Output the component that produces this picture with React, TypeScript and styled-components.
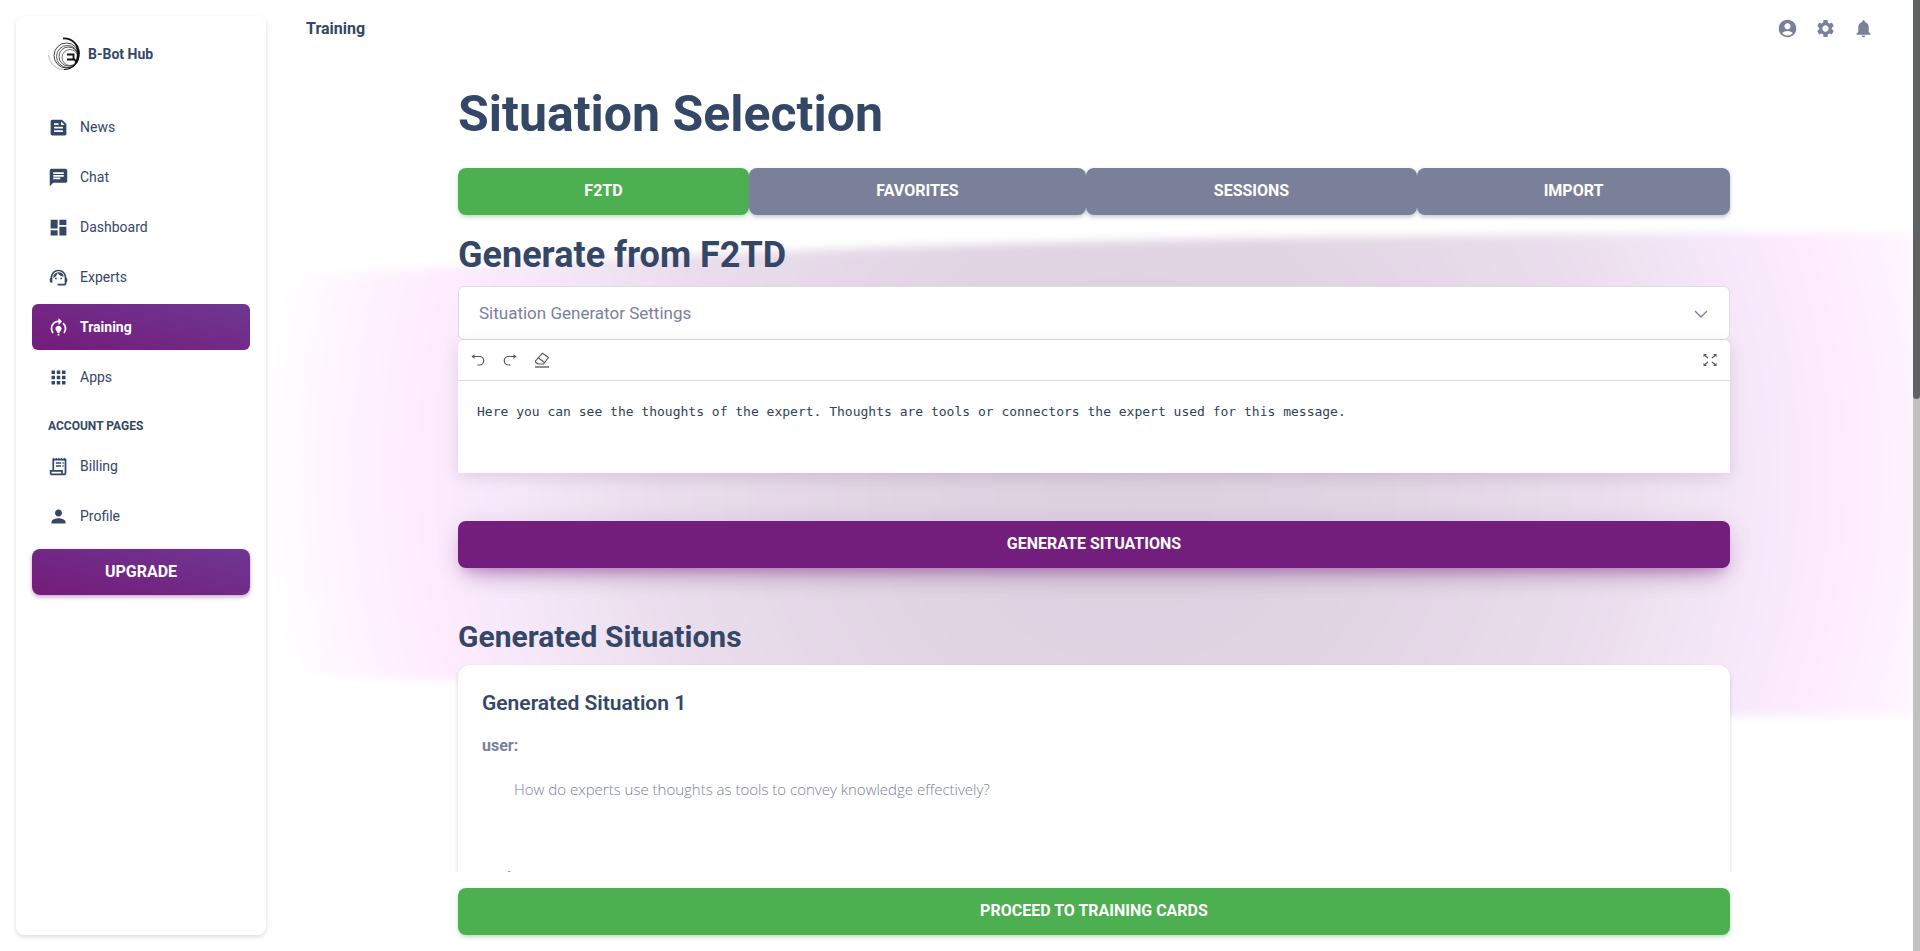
import React from 'react';
import styled, { createGlobalStyle, css } from 'styled-components';
import {
  MdAccountCircle,
  MdApps,
  MdChat,
  MdDashboard,
  MdFeed,
  MdModelTraining,
  MdNotifications,
  MdPerson,
  MdReceiptLong,
  MdSettings,
  MdSupportAgent,
} from 'react-icons/md';

const navy = '#344767';
const slate = '#7b809a';
const green = '#4caf50';
const purple = '#731e7c';
const purpleGradient = 'linear-gradient(195deg, #6e3792, #751b7a)';

const GlobalStyle = createGlobalStyle`
  *, *::before, *::after { box-sizing: border-box; }
  body {
    margin: 0;
    background: #fff;
    color: ${navy};
    font-family: Roboto, "Liberation Sans", sans-serif;
    font-size: 16px;
    line-height: 24px;
  }
  h1, h2, h3, h4, p, ul { margin: 0; padding: 0; }
  button, textarea { font: inherit; }
`;

const Shell = styled.div`
  display: flex;
  height: 100vh;
  overflow: hidden;
`;

const Sidebar = styled.aside`
  display: flex;
  flex-direction: column;
  flex: none;
  width: 250px;
  margin: 16px 8px 16px 16px;
  padding: 0 16px;
  border-radius: 8px;
  background: #fff;
  box-shadow: 0 2px 4px rgba(0, 0, 0, 0.14);
  overflow-y: auto;
`;

const Brand = styled.a`
  display: flex;
  align-items: center;
  gap: 6px;
  height: 76px;
  margin-bottom: 12px;
  padding-left: 16px;
  color: ${navy};
  font-size: 14px;
  font-weight: 700;
  text-decoration: none;
`;

const NavList = styled.ul`
  display: flex;
  flex-direction: column;
  gap: 4px;
  list-style: none;
`;

const NavLink = styled.a<{ $active?: boolean }>`
  display: flex;
  align-items: center;
  gap: 11px;
  height: 46px;
  padding-left: 16px;
  border-radius: 6px;
  color: ${(p) => (p.$active ? '#fff' : navy)};
  background: ${(p) => (p.$active ? purpleGradient : 'none')};
  font-size: 14px;
  font-weight: ${(p) => (p.$active ? 700 : 400)};
  text-decoration: none;

  svg {
    width: 21px;
    height: 21px;
  }
`;

const NavHeading = styled.h4`
  padding: 16px 16px 7px;
  font-size: 12px;
  font-weight: 700;
  line-height: 20px;
  text-transform: uppercase;
`;

const Button = styled.button<{ $tone: 'green' | 'slate' | 'purple' | 'gradient'; $raised?: boolean }>`
  width: 100%;
  min-height: 47px;
  padding: 0 24px 1px;
  border: 0;
  border-radius: 8px;
  color: #fff;
  font-weight: 700;
  text-transform: uppercase;
  cursor: pointer;
  ${(p) =>
    ({
      green: css`
        background: ${green};
        box-shadow: 0 2px 4px rgba(76, 175, 80, 0.4);
      `,
      slate: css`
        background: ${slate};
        box-shadow: 0 2px 4px rgba(123, 128, 154, 0.45);
      `,
      purple: css`
        background: ${purple};
        box-shadow: 0 2px 4px rgba(115, 30, 124, 0.4);
      `,
      gradient: css`
        background: ${purpleGradient};
        box-shadow: 0 2px 4px rgba(115, 30, 124, 0.4);
      `,
    })[p.$tone]}
  ${(p) =>
    p.$raised &&
    css`
      box-shadow:
        0 14px 26px -12px rgba(115, 30, 124, 0.45),
        0 4px 23px rgba(115, 30, 124, 0.14),
        0 8px 10px -5px rgba(115, 30, 124, 0.2);
    `}
`;

const UpgradeButton = styled(Button)`
  flex: none;
  min-height: 46px;
  margin-top: 10px;
`;

const Main = styled.main`
  position: relative;
  display: flex;
  flex: 1;
  flex-direction: column;
  min-width: 0;
  padding: 0 6px 16px 0;
`;

const Backdrop = styled.svg`
  position: absolute;
  top: 0;
  left: 0;
  z-index: -1;
  width: 100%;
  height: 760px;
`;

const TopBar = styled.header`
  display: flex;
  flex: none;
  align-items: center;
  justify-content: space-between;
  height: 57px;
  padding: 0 40px 0 32px;
  font-weight: 700;
`;

const TopActions = styled.div`
  display: flex;
  gap: 17px;
`;

const IconButton = styled.button`
  display: inline-flex;
  align-items: center;
  justify-content: center;
  padding: 0;
  border: 0;
  background: none;
  color: ${slate};
  cursor: pointer;

  svg {
    width: 21px;
    height: 21px;
  }
`;

const Scroller = styled.div`
  flex: 1;
  min-height: 0;
  overflow-y: auto;
  scrollbar-width: none;
`;

const Column = styled.div`
  width: calc(100% - 48px);
  max-width: 1272px;
  margin: 0 auto;
`;

const PageTitle = styled.h1`
  margin: 27px 0 24px;
  font-size: 50px;
  line-height: 60px;
`;

const Tabs = styled.div`
  display: grid;
  grid-template-columns: 291fr 337fr 331fr 313fr;
`;

const SectionTitle = styled.h2`
  margin: 18px 0 9px;
  font-size: 36px;
  line-height: 44px;
`;

const SubTitle = styled.h3`
  margin: 51px 0 10px;
  font-size: 30px;
  line-height: 36px;
`;

const SettingsToggle = styled.button`
  display: flex;
  align-items: center;
  justify-content: space-between;
  width: 100%;
  height: 54px;
  padding: 0 20px 1px;
  border: 1px solid #dcdcdc;
  border-radius: 6px;
  background: #fff;
  color: ${slate};
  font-size: 17px;
  cursor: pointer;
`;

const Editor = styled.section`
  margin-bottom: 48px;
  border-radius: 6px 6px 0 0;
  background: #fff;
  box-shadow: 0 4px 16px rgba(60, 20, 70, 0.13);
`;

const Toolbar = styled.div`
  display: flex;
  align-items: center;
  gap: 16px;
  height: 41px;
  padding: 0 12px;
  border-bottom: 1px solid #dcdcdc;
`;

const ToolButton = styled(IconButton)<{ $end?: boolean }>`
  margin-left: ${(p) => (p.$end ? 'auto' : 0)};
  color: #555;

  svg {
    width: 16px;
    height: 16px;
  }
`;

const EditorText = styled.textarea`
  display: block;
  width: 100%;
  height: 92px;
  padding: 21px 19px;
  border: 0;
  outline: 0;
  resize: none;
  background: none;
  color: #2f4257;
  font-family: "DejaVu Sans Mono", monospace;
  font-size: 13px;
  line-height: 20px;
`;

const Card = styled.article`
  padding: 24px;
  border-radius: 12px;
  background: #fff;
  box-shadow: 0 2px 4px rgba(0, 0, 0, 0.14);
`;

const CardTitle = styled.h4`
  margin-bottom: 17px;
  font-size: 21px;
  font-weight: 600;
  line-height: 28px;
`;

const Speaker = styled.p`
  color: ${slate};
  font-weight: 700;
`;

const Quote = styled.p`
  margin: 19px 0 65px;
  padding-left: 32px;
  color: ${slate};
  font-family: "Open Sans", sans-serif;
  font-size: 15px;
  font-weight: 300;
`;

const Footer = styled(Column)`
  flex: none;
  padding-top: 16px;
`;

const ScrollTrack = styled.div`
  position: fixed;
  top: 0;
  right: 0;
  bottom: 0;
  width: 7px;
  background: #c1c1c1;
`;

const ScrollThumb = styled.div`
  height: 42%;
  border-radius: 0 0 4px 4px;
  background: #606162;
`;

const navItems = [
  { label: 'News', Icon: MdFeed },
  { label: 'Chat', Icon: MdChat },
  { label: 'Dashboard', Icon: MdDashboard },
  { label: 'Experts', Icon: MdSupportAgent },
  { label: 'Training', Icon: MdModelTraining, active: true },
  { label: 'Apps', Icon: MdApps },
];

// Open receipt outline with a curled foot
const ReceiptIcon = () => (
  <svg viewBox="0 0 24 24" fill="none" stroke="currentColor" strokeWidth="2" aria-hidden="true">
    <path d="M6 16V4H20V19A2 2 0 0 1 18 21H5A2 2 0 0 1 3 19V17H16V19A2 2 0 0 0 18 21" />
    <path d="M5 4L6.500 2L8 4L9.500 2L11 4L12.500 2L14 4L15.500 2L17 4L18.500 2L21 4Z" fill="currentColor" stroke="none" />
    <path d="M9 8H15M9 11.500H15M16.500 8H18M16.500 11.500H18" strokeWidth="1.800" />
  </svg>
);

const accountItems = [
  { label: 'Billing', Icon: ReceiptIcon },
  { label: 'Profile', Icon: MdPerson },
];

const tabs = ['F2TD', 'Favorites', 'Sessions', 'Import'];

const Logo = () => (
  <svg width="34" height="34" viewBox="0 0 34 34" fill="none" stroke="#111" aria-hidden="true">
    <path d="M15 1.5C24 1 31 8 31 17" strokeWidth="1.8" />
    <path d="M31 17C31 26 24 32.500 16 32.500" strokeWidth="1.2" />
    <path d="M16 32.500C8 32.500 2 27 .5 18" strokeWidth=".6" opacity=".5" />
    <circle cx="18.500" cy="18.500" r="12.500" strokeWidth=".8" />
    <circle cx="19.500" cy="19.500" r="11" strokeWidth=".7" />
    <circle cx="20.500" cy="19.500" r="9.500" strokeWidth=".7" />
    <circle cx="22" cy="20.500" r="8" strokeWidth=".6" fill="#fff" />
    <path d="M28 8C32 14 32 24 25 30C30 23 30 14 28 8Z" fill="#111" strokeWidth=".6" />
    <path d="M19 17.500H25.500V22.500M19 22.500H26.500L29 26" strokeWidth="1.800" />
  </svg>
);

const UndoIcon = () => (
  <svg viewBox="0 0 16 16" fill="none" stroke="currentColor" strokeWidth="1.2" aria-hidden="true">
    <path d="M3 4.500H9.500A4.200 4.200 0 0 1 9.500 13H7.500" />
    <path d="M1.500 4.500L4.500 2.300V6.700Z" fill="currentColor" stroke="none" />
  </svg>
);

const RedoIcon = () => (
  <svg viewBox="0 0 16 16" fill="none" stroke="currentColor" strokeWidth="1.2" aria-hidden="true">
    <path d="M13 4.500H6.500A4.200 4.200 0 0 0 6.500 13H8.500" />
    <path d="M14.500 4.500L11.500 2.300V6.700Z" fill="currentColor" stroke="none" />
  </svg>
);

const EraserIcon = () => (
  <svg viewBox="0 0 16 16" fill="none" stroke="currentColor" strokeWidth="1.1" aria-hidden="true">
    <path d="M8.500 1.200L14.500 5.500L9.500 12H4L1.500 10V8.800Z" strokeLinejoin="round" />
    <path d="M4.500 6L10.500 10.500" />
    <path d="M1 15H15" strokeWidth="1.300" />
  </svg>
);

const ExpandIcon = () => (
  <svg viewBox="0 0 16 16" fill="none" stroke="currentColor" strokeWidth="1.2" aria-hidden="true">
    <path d="M2.500 3L6 6M13.500 3L10 6M2.500 13L6 10M13.500 13L10 10" />
    <path
      d="M1.500 2H5L1.500 5ZM14.500 2H11L14.500 5ZM1.500 14H5L1.500 11ZM14.500 14H11L14.500 11Z"
      fill="currentColor"
      stroke="none"
    />
  </svg>
);

const ChevronIcon = () => (
  <svg width="16" height="16" viewBox="0 0 16 16" fill="none" stroke="currentColor" strokeWidth="1.300" aria-hidden="true">
    <path d="M2 6L8 12L14 6" />
  </svg>
);

const Glow = () => (
  <Backdrop viewBox="274 0 1646 760" preserveAspectRatio="none" aria-hidden="true">
    <defs>
      <radialGradient id="glow" gradientUnits="userSpaceOnUse" cx="1132" cy="470" r="870">
        <stop offset="0" stopColor="#dcd0df" />
        <stop offset=".3" stopColor="#e1d4e3" />
        <stop offset=".55" stopColor="#eaddec" />
        <stop offset=".67" stopColor="#f2e5f5" />
        <stop offset=".75" stopColor="#f8e9fb" />
        <stop offset=".82" stopColor="#fdecfe" />
        <stop offset=".9" stopColor="#fff3ff" />
        <stop offset="1" stopColor="#ffffff" />
      </radialGradient>
      <filter id="soften" x="-5%" y="-10%" width="110%" height="120%">
        <feGaussianBlur stdDeviation="5" />
      </filter>
    </defs>
    <path
      d="M240 278C400 272 560 260 760 252C1050 240 1350 236 1700 233H1960V716H1730C1300 715 800 700 458 681C380 678 300 674 240 670Z"
      fill="url(#glow)"
      filter="url(#soften)"
    />
  </Backdrop>
);

export default function App() {
  return (
    <>
      <GlobalStyle />
      <Shell>
        <Sidebar>
          <Brand href="#">
            <Logo />
            B-Bot Hub
          </Brand>
          <nav>
            <NavList>
              {navItems.map(({ label, Icon, active }) => (
                <li key={label}>
                  <NavLink href="#" $active={active} aria-current={active ? 'page' : undefined}>
                    <Icon />
                    {label}
                  </NavLink>
                </li>
              ))}
            </NavList>
            <NavHeading>Account pages</NavHeading>
            <NavList>
              {accountItems.map(({ label, Icon }) => (
                <li key={label}>
                  <NavLink href="#">
                    <Icon />
                    {label}
                  </NavLink>
                </li>
              ))}
            </NavList>
          </nav>
          <UpgradeButton $tone="gradient">Upgrade</UpgradeButton>
        </Sidebar>

        <Main>
          <Glow />
          <TopBar>
            <span>Training</span>
            <TopActions>
              <IconButton aria-label="Account"><MdAccountCircle /></IconButton>
              <IconButton aria-label="Settings"><MdSettings /></IconButton>
              <IconButton aria-label="Notifications"><MdNotifications /></IconButton>
            </TopActions>
          </TopBar>

          <Scroller>
            <Column>
              <PageTitle>Situation Selection</PageTitle>
              <Tabs>
                {tabs.map((tab, i) => (
                  <Button key={tab} $tone={i === 0 ? 'green' : 'slate'}>{tab}</Button>
                ))}
              </Tabs>

              <SectionTitle>Generate from F2TD</SectionTitle>
              <SettingsToggle aria-expanded="false">
                Situation Generator Settings
                <ChevronIcon />
              </SettingsToggle>
              <Editor>
                <Toolbar>
                  <ToolButton aria-label="Undo"><UndoIcon /></ToolButton>
                  <ToolButton aria-label="Redo"><RedoIcon /></ToolButton>
                  <ToolButton aria-label="Clear"><EraserIcon /></ToolButton>
                  <ToolButton aria-label="Full screen" $end><ExpandIcon /></ToolButton>
                </Toolbar>
                <EditorText
                  aria-label="Source text"
                  spellCheck={false}
                  defaultValue="Here you can see the thoughts of the expert. Thoughts are tools or connectors the expert used for this message."
                />
              </Editor>
              <Button $tone="purple" $raised>Generate situations</Button>

              <SubTitle>Generated Situations</SubTitle>
              <Card>
                <CardTitle>Generated Situation 1</CardTitle>
                <Speaker>user:</Speaker>
                <Quote>How do experts use thoughts as tools to convey knowledge effectively?</Quote>
                <Speaker>assistant:</Speaker>
              </Card>
            </Column>
          </Scroller>

          <Footer>
            <Button $tone="green">Proceed to training cards</Button>
          </Footer>
        </Main>
      </Shell>
      <ScrollTrack aria-hidden="true">
        <ScrollThumb />
      </ScrollTrack>
    </>
  );
}
